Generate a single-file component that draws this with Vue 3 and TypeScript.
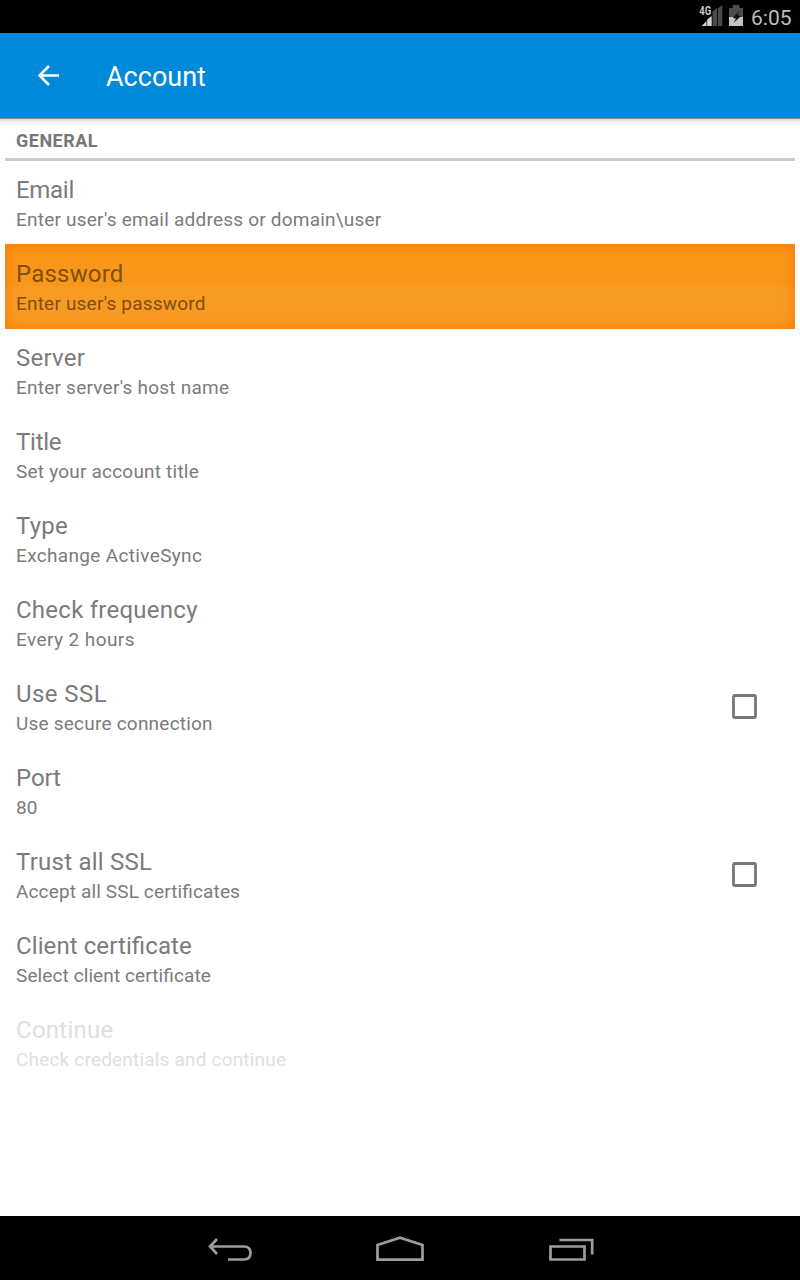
<script setup lang="ts">
interface Row {
  title: string
  note: string
  titleSpacing: number
  noteSpacing: number
  check?: boolean
  state?: 'active' | 'disabled'
}
const rows: Row[] = [
  { title: 'Email', note: "Enter user's email address or domain\\user", titleSpacing: -0.3, noteSpacing: 0.22 },
  { title: 'Password', note: "Enter user's password", titleSpacing: 0.2, noteSpacing: 0.2, state: 'active' },
  { title: 'Server', note: "Enter server's host name", titleSpacing: 0.25, noteSpacing: 0.23 },
  { title: 'Title', note: 'Set your account title', titleSpacing: -0.25, noteSpacing: 0.21 },
  { title: 'Type', note: 'Exchange ActiveSync', titleSpacing: 0.25, noteSpacing: 0.34 },
  { title: 'Check frequency', note: 'Every 2 hours', titleSpacing: 0.25, noteSpacing: 0.42 },
  { title: 'Use SSL', note: 'Use secure connection', titleSpacing: 0.42, noteSpacing: 0.22, check: true },
  { title: 'Port', note: '80', titleSpacing: -0.1, noteSpacing: 0.1 },
  { title: 'Trust all SSL', note: 'Accept all SSL certificates', titleSpacing: 0.24, noteSpacing: 0.14, check: true },
  { title: 'Client certificate', note: 'Select client certificate', titleSpacing: 0.09, noteSpacing: 0.1 },
  { title: 'Continue', note: 'Check credentials and continue', titleSpacing: 0.27, noteSpacing: 0.19, state: 'disabled' },
]
</script>

<template>
  <div class="screen">
    <header class="status">
      <svg class="indicators" width="48" height="33" viewBox="0 0 48 33">
        <path d="M13.500 14V11.500L18 8V26H13.500ZM18.800 8.500L23.300 5V26H18.800Z" fill="#4a4a4a" />
        <path d="M12.700 16V26H8.200V19.500ZM7.500 21V26H2.700Z" fill="#d5d5d5" />
        <text class="network" x="0.300" y="15" textLength="12" lengthAdjust="spacingAndGlyphs">4G</text>
        <path d="M30 8h3.700V5h6.800v3H44V17H30Z" fill="#4d4d4d" />
        <path d="M30 17H44V26H30Z" fill="#c4c4c4" />
        <path d="M40.500 10.500L33.700 18L37 18.500L34.500 23L42 16L38.500 15Z" fill="#111" />
      </svg>
      <span class="time">6:05</span>
    </header>
    <div class="bar">
      <svg class="back" width="24" height="24" viewBox="0 0 24 24">
        <path d="M23 11.500H4M13 2L3.500 11.500L13 21" fill="none" stroke="#fff" stroke-width="2.500" />
      </svg>
      <h1>Account</h1>
    </div>
    <main>
      <h2>GENERAL</h2>
      <div v-for="r in rows" :key="r.title" class="row" :class="r.state">
        <div>
          <div class="title" :style="{ letterSpacing: r.titleSpacing + 'px' }">{{ r.title }}</div>
          <div class="note" :style="{ letterSpacing: r.noteSpacing + 'px' }">{{ r.note }}</div>
        </div>
        <svg v-if="r.check" class="box" width="26" height="26" viewBox="0 0 26 26">
          <rect x="2.500" y="1.500" width="22" height="22" rx="1.500" fill="none" stroke="#777" stroke-width="2.800" />
        </svg>
      </div>
    </main>
    <nav>
      <svg width="800" height="64" viewBox="0 0 800 64" fill="none" stroke="#9d9d9d" stroke-width="2.700">
        <path d="M228 43.500H244Q250.500 43.500 250.500 37Q250.500 30.500 244 30.500H210M217 23L210 30.500L217 38" />
        <path d="M377.500 43.700V29L400 21.700L422.500 29V43.700Z" />
        <path d="M550.500 30.500H584.500V43.500H550.500ZM559.500 24H592.200V38.500" />
      </svg>
    </nav>
  </div>
</template>

<style>
body { margin: 0; }
</style>

<style scoped>
.screen { width: 800px; height: 1280px; display: flex; flex-direction: column; font-family: Roboto, sans-serif; background: #fff; }
.status { height: 33px; background: #000; display: flex; justify-content: flex-end; color: #bebebe; }
.indicators { flex: none; margin-right: 4px; }
.network { font-size: 13px; font-weight: 700; fill: #c4c4c4; stroke: #000; stroke-width: 1px; paint-order: stroke; }
.time { font-size: 21px; line-height: 36px; width: 49px; }
.bar { height: 85px; background: #0089d8; display: flex; align-items: center; color: #fff; padding-left: 36px; box-sizing: border-box; }
h1 { font-size: 27px; font-weight: 400; margin: 2px 0 0 46px; }
main { flex: 1; padding: 0 5px; background: linear-gradient(#8f8b88 0, #8f8b88 1px, #d8d8d8 1px, #f1f1f1 4px, #fff 8px); }
h2 { margin: 0; padding-left: 11px; height: 43px; box-sizing: border-box; border-bottom: 3px solid #ccc; font-size: 18px; line-height: 46px; letter-spacing: .5px; color: #777; }
.row { height: 84px; box-sizing: border-box; padding: 13px 38px 0 11px; display: flex; justify-content: space-between; color: #7b7b7b; font-feature-settings: "liga" 1; }
.title { font-size: 24px; line-height: 32px; }
.note { font-size: 19px; line-height: 28px; }
.active { background: linear-gradient(transparent 50%, rgba(255, 255, 255, .04) 50%), #f8971a; box-shadow: inset 0 0 14px 1px #fa7c08; color: #824e0c; height: 85px; margin-top: -1px; padding-top: 14px; }
.disabled { color: #e1dde0; }
.box { flex: none; margin-top: 16px; }
nav { height: 64px; background: #000; }
nav svg { display: block; }
</style>
